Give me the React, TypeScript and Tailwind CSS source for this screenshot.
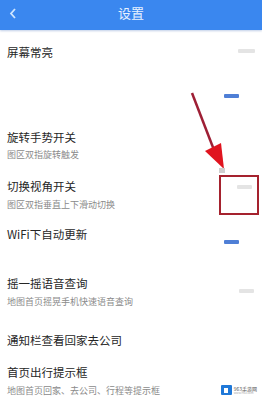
import React from "react";

const font = { fontFamily: '"Noto Sans CJK SC", "Noto Sans", sans-serif' };

const Dash = ({ on, className }: { on?: boolean; className: string }) => (
  <div
    className={`h-[4px] w-[15px] shrink-0 rounded-[1px] ${
      on ? "bg-[#4f7fd6]" : "bg-[#e4e4e4]"
    } ${className}`}
  />
);

export default function App() {
  return (
    <div
      className="relative h-[401px] w-[262px] overflow-hidden bg-white"
      style={font}
    >
      {/* header */}
      <div className="relative flex h-[30px] items-start justify-center bg-[#3a87ef] pt-[4px] shadow-[0_1px_2px_rgba(0,60,160,0.25)]">
        <svg
          className="absolute left-[9px] top-[8px]"
          width="8"
          height="11"
          viewBox="0 0 8 11"
        >
          <polyline
            points="6,1 2,5.5 6,10"
            fill="none"
            stroke="#cfe6ff"
            strokeWidth="1.8"
          />
        </svg>
        <span className="text-[13px] leading-[17px] text-[#e8f2ff]">设置</span>
      </div>

      {/* 屏幕常亮 */}
      <div className="flex h-[45px] justify-between px-[7px]">
        <div className="mt-[13px] text-[11.5px] leading-[18px] text-[#262626]">
          屏幕常亮
        </div>
        <Dash className="mt-[19px] w-[17px]" />
      </div>

      {/* blank row */}
      <div className="flex h-[43px] justify-end pr-[23px]">
        <Dash on className="mt-[19px]" />
      </div>

      {/* 旋转手势开关 */}
      <div className="flex h-[50px] justify-between px-[7px]">
        <div className="mt-[10px]">
          <div className="text-[11.5px] leading-[18px] text-[#262626]">
            旋转手势开关
          </div>
          <div className="mt-[2px] text-[9px] leading-[14px] text-[#8a8a8a]">
            图区双指旋转触发
          </div>
        </div>
      </div>

      {/* 切换视角开关 */}
      <div className="flex h-[50px] justify-between pl-[7px] pr-[10px]">
        <div className="mt-[9px]">
          <div className="text-[11.5px] leading-[18px] text-[#262626]">
            切换视角开关
          </div>
          <div className="mt-[3px] text-[9px] leading-[14px] text-[#8a8a8a]">
            图区双指垂直上下滑动切换
          </div>
        </div>
        <Dash className="mt-[17px]" />
      </div>

      {/* WiFi */}
      <div className="flex h-[44px] justify-between pl-[7px] pr-[23px]">
        <div className="mt-[7px] text-[11.5px] leading-[18px] text-[#262626]">
          WiFi下自动更新
        </div>
        <Dash on className="mt-[22px]" />
      </div>

      {/* 摇一摇 */}
      <div className="flex h-[56px] justify-between pl-[7px] pr-[8px]">
        <div className="mt-[12px]">
          <div className="text-[11.5px] leading-[18px] text-[#262626]">
            摇一摇语音查询
          </div>
          <div className="mt-[3px] text-[9px] leading-[14px] text-[#8a8a8a]">
            地图首页摇晃手机快速语音查询
          </div>
        </div>
        <Dash className="mt-[27px]" />
      </div>

      {/* 通知栏 */}
      <div className="flex h-[40px] px-[7px]">
        <div className="mt-[13px] text-[11.5px] leading-[18px] text-[#262626]">
          通知栏查看回家去公司
        </div>
      </div>

      {/* 首页出行提示框 */}
      <div className="flex h-[43px] justify-between pl-[7px] pr-[5px]">
        <div className="mt-[5px]">
          <div className="text-[11.5px] leading-[18px] text-[#262626]">
            首页出行提示框
          </div>
          <div className="mt-[3px] text-[9px] leading-[14px] text-[#8a8a8a]">
            地图首页回家、去公司、行程等提示框
          </div>
        </div>
        <div className="mt-[21px] flex items-center gap-[2px]">
          <div className="flex h-[10px] w-[11px] items-center justify-center rounded-[1px] bg-[#1f78d8]">
            <div className="h-[5px] w-[4px] bg-white" />
          </div>
          <div className="text-[5px] leading-[6px] text-[#555]">
            963手游网
            <div className="text-[3px] leading-[3px] text-[#aaa]">
              www.963.com
            </div>
          </div>
        </div>
      </div>

      {/* annotation: red box */}
      <div className="absolute left-[219px] top-[175px] h-[40px] w-[40px] border-2 border-[#a5222e]" />

      {/* annotation: red arrow */}
      <svg
        className="absolute left-0 top-0"
        width="262"
        height="401"
        viewBox="0 0 262 401"
      >
        <line
          x1="192"
          y1="93"
          x2="214"
          y2="150"
          stroke="#9e1f35"
          strokeWidth="2.5"
        />
        <polygon points="205,151 221,143 224,169" fill="#e0141f" />
        <rect x="219" y="168" width="6" height="5" fill="#cfcfcf" />
      </svg>
    </div>
  );
}
